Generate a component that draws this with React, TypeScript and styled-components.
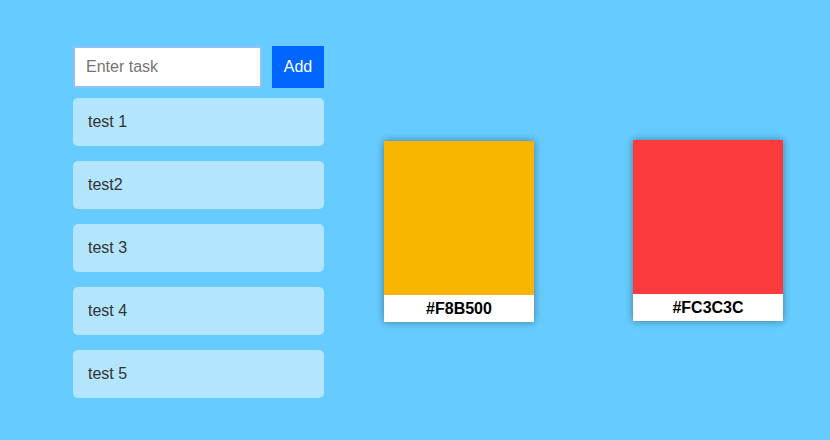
import styled, { createGlobalStyle } from 'styled-components';

const GlobalStyle = createGlobalStyle`
  html, body {
    margin: 0;
    padding: 0;
    background-color: #66ccff;
    font-family: "Liberation Sans", Arial, sans-serif;
  }
  #root {
    min-height: 100vh;
  }
`;

const StyledPage = styled.div`
  display: flex;
  flex-direction: row;
  align-items: flex-start;
  padding: 46px 0 0 73px;
  min-height: 100vh;
  box-sizing: border-box;
`;

const TodoColumn = styled.div`
  width: 251px;
  display: flex;
  flex-direction: column;
  gap: 15px;
`;

const TaskForm = styled.form`
  display: flex;
  flex-direction: row;
  gap: 10px;
  margin-bottom: -5px;
`;

const TaskInput = styled.input`
  width: 189px;
  height: 42px;
  box-sizing: border-box;
  border: 2px solid #8ec3f7;
  padding: 0 11px;
  font-family: inherit;
  font-size: 16px;
  color: #333;
  background: #fff;
  outline: none;
  &::placeholder {
    color: #757575;
  }
`;

const AddButton = styled.button`
  width: 52px;
  height: 42px;
  border: none;
  background-color: #0066ff;
  color: #fff;
  font-family: inherit;
  font-size: 16px;
  padding: 0;
  cursor: pointer;
`;

const TaskItem = styled.div`
  height: 48px;
  display: flex;
  align-items: center;
  padding: 0 15px;
  border-radius: 5px;
  background-color: #b3e5fc;
  color: #333;
  font-size: 16px;
`;

const SwatchCard = styled.div<{ $left: number; $top: number }>`
  width: 150px;
  margin-left: ${(p) => p.$left}px;
  margin-top: ${(p) => p.$top}px;
  background: #fff;
  box-shadow: 0 0 8px rgba(0, 0, 0, 0.4);
  display: flex;
  flex-direction: column;
`;

const SwatchColor = styled.div<{ $color: string }>`
  height: 154px;
  background-color: ${(p) => p.$color};
`;

const SwatchLabel = styled.div`
  height: 27px;
  display: flex;
  align-items: center;
  justify-content: center;
  font-weight: bold;
  font-size: 16px;
  color: #000;
`;

const tasks = ['test 1', 'test2', 'test 3', 'test 4', 'test 5'];

const swatches = [
  { color: '#F8B500', left: 60, top: 95 },
  { color: '#FC3C3C', left: 99, top: 94 },
];

export default function App() {
  return (
    <>
      <GlobalStyle />
      <StyledPage>
        <TodoColumn>
          <TaskForm onSubmit={(e) => e.preventDefault()}>
            <TaskInput placeholder="Enter task" />
            <AddButton type="submit">Add</AddButton>
          </TaskForm>
          {tasks.map((t) => (
            <TaskItem key={t}>{t}</TaskItem>
          ))}
        </TodoColumn>
        {swatches.map((s) => (
          <SwatchCard key={s.color} $left={s.left} $top={s.top}>
            <SwatchColor $color={s.color} />
            <SwatchLabel>{s.color}</SwatchLabel>
          </SwatchCard>
        ))}
      </StyledPage>
    </>
  );
}
